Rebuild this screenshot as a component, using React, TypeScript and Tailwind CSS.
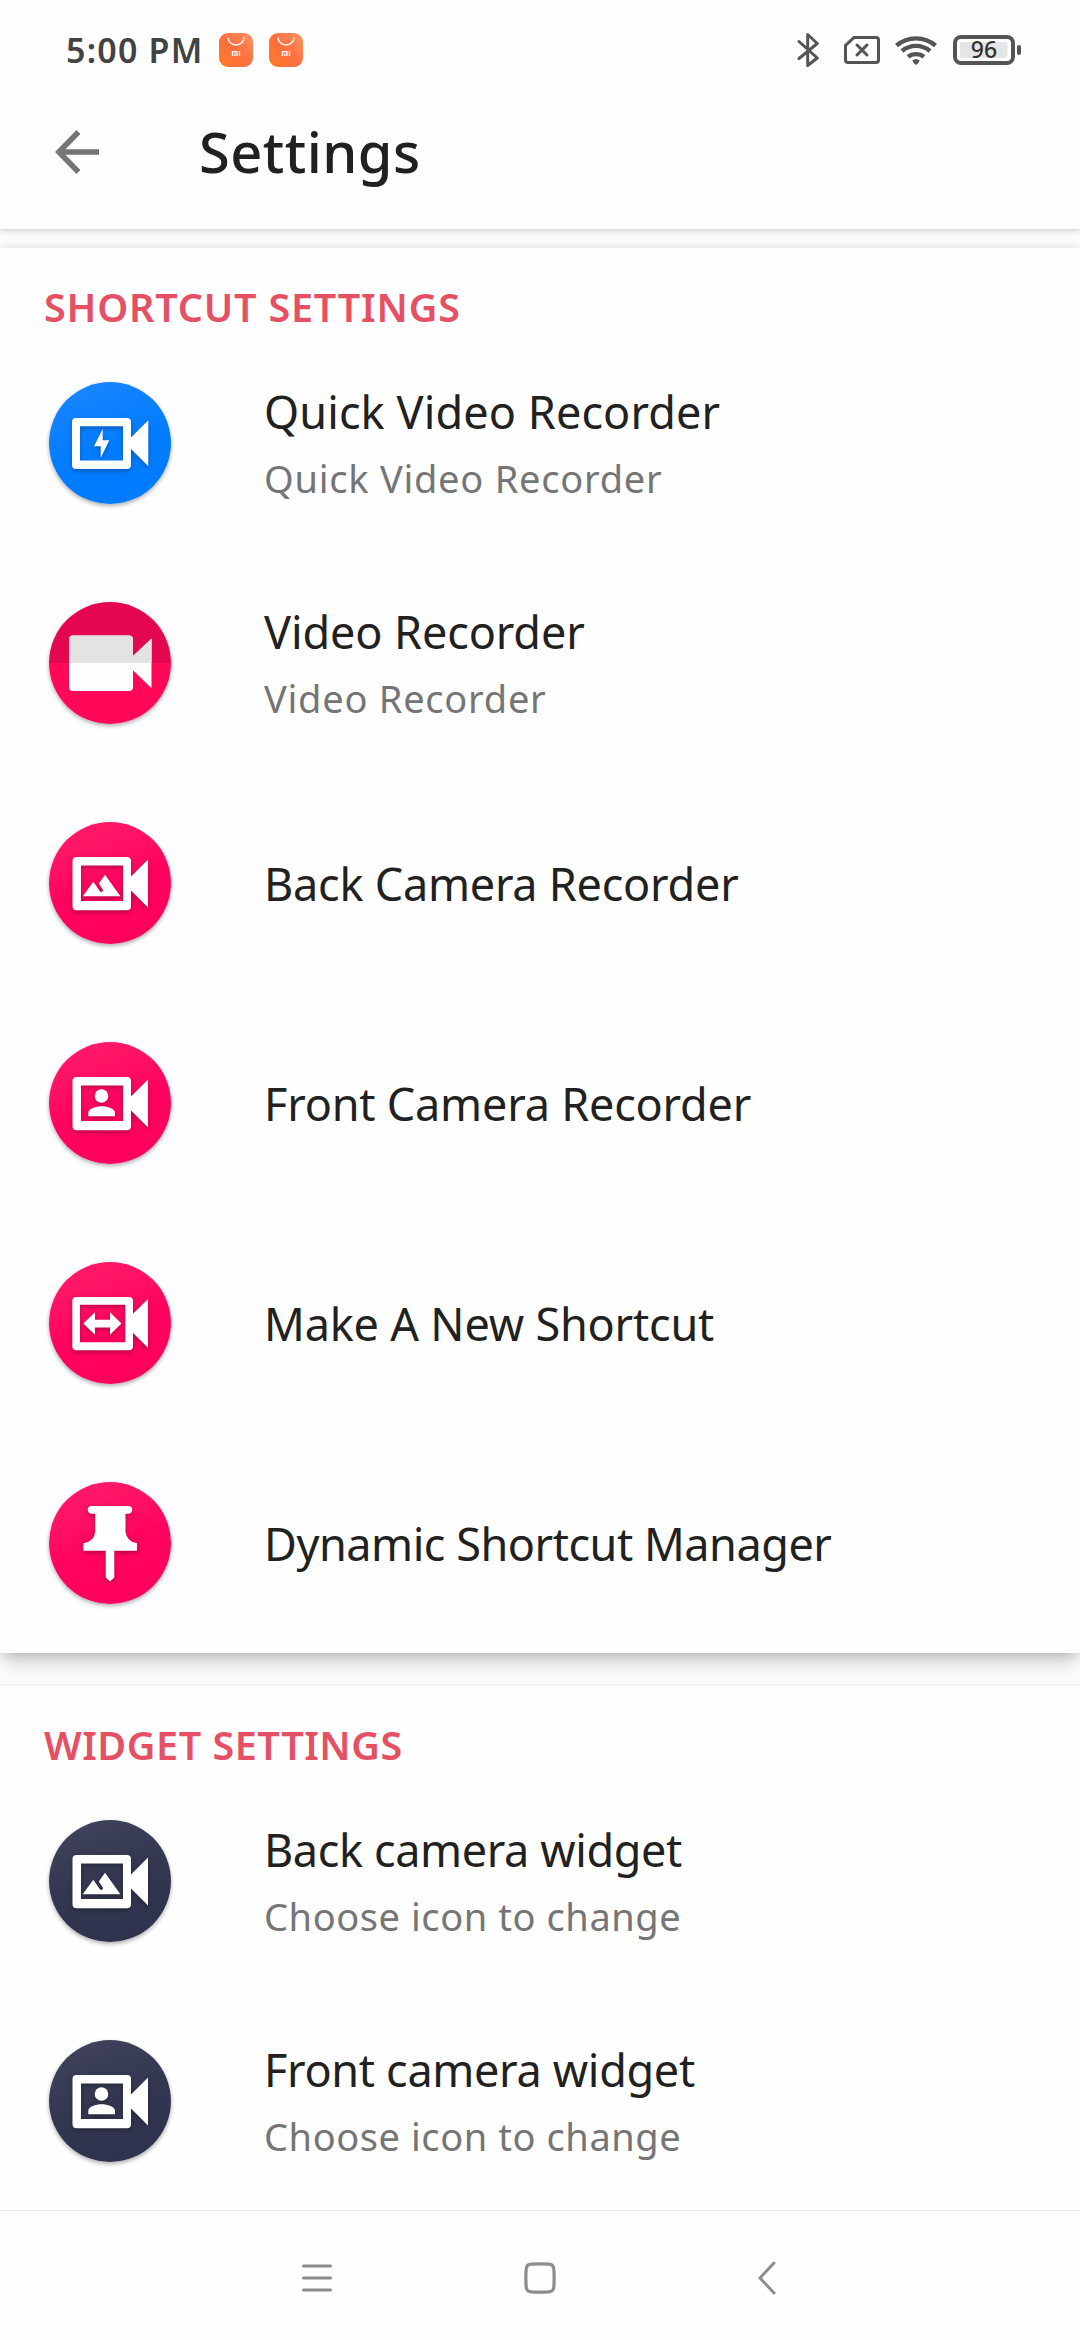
import type { ReactNode } from 'react';

type IconKind = 'quick' | 'video' | 'back' | 'front' | 'swap' | 'pin';
type Tone = 'blue' | 'pink' | 'flat' | 'navy';

interface Item {
  icon: IconKind;
  tone: Tone;
  title: string;
  titleTracking: string;
  subtitle?: string;
  subtitleTracking?: string;
}

const shortcuts: Item[] = [
  {
    icon: 'quick',
    tone: 'blue',
    title: 'Quick Video Recorder',
    titleTracking: 'tracking-[0.11px]',
    subtitle: 'Quick Video Recorder',
    subtitleTracking: 'tracking-[0.75px]',
  },
  {
    icon: 'video',
    tone: 'flat',
    title: 'Video Recorder',
    titleTracking: 'tracking-[-0.1px]',
    subtitle: 'Video Recorder',
    subtitleTracking: 'tracking-[0.75px]',
  },
  { icon: 'back', tone: 'pink', title: 'Back Camera Recorder', titleTracking: 'tracking-[-0.23px]' },
  { icon: 'front', tone: 'pink', title: 'Front Camera Recorder', titleTracking: 'tracking-[-0.2px]' },
  { icon: 'swap', tone: 'pink', title: 'Make A New Shortcut', titleTracking: 'tracking-[-0.18px]' },
  { icon: 'pin', tone: 'pink', title: 'Dynamic Shortcut Manager', titleTracking: 'tracking-[-0.46px]' },
];

const widgets: Item[] = [
  {
    icon: 'back',
    tone: 'navy',
    title: 'Back camera widget',
    titleTracking: 'tracking-[-0.38px]',
    subtitle: 'Choose icon to change',
    subtitleTracking: 'tracking-[0.57px]',
  },
  {
    icon: 'front',
    tone: 'navy',
    title: 'Front camera widget',
    titleTracking: 'tracking-[-0.32px]',
    subtitle: 'Choose icon to change',
    subtitleTracking: 'tracking-[0.57px]',
  },
];

const tones: Record<Tone, string> = {
  blue: 'bg-linear-160 from-[#1a87ff] via-[#037dff] to-[#007aff]',
  pink: 'bg-linear-160 from-[#ff1c6c] via-[#ff045f] to-[#ff005c]',
  flat: 'bg-linear-to-b from-[#e4064e] from-50% to-[#ff0858] to-50%',
  navy: 'bg-linear-160 from-[#43455e] via-[#33364f] to-[#2f324c]',
};

const frame =
  'M-33.5-26H17a4 4 0 0 1 4 4V23.300a4 4 0 0 1-4 4H-33.500a4 4 0 0 1-4-4V-22a4 4 0 0 1 4-4zM-29-17.500V18H13V-17.500z M21-6.500L38-23.500V24.500L21 7.500z';

const glyphs: Record<IconKind, ReactNode> = {
  quick: (
    <>
      <path
        fillRule="evenodd"
        d="M-34-25H17a4 4 0 0 1 4 4V22a4 4 0 0 1-4 4H-34a4 4 0 0 1-4-4V-21a4 4 0 0 1 4-4zM-30-16.700V17.500H13V-16.700z M21-5.500L38.300-22.700V23.200L21 6z"
      />
      <path d="M-7.300-14L-16 3.300H-9.300V15L-.7-2.700H-7.300z" />
    </>
  ),
  video: (
    <>
      <path
        fill="#fdfdfd"
        d="M-37-27.500H19a4 4 0 0 1 4 4V24a4 4 0 0 1-4 4H-37a4 4 0 0 1-4-4V-23.500a4 4 0 0 1 4-4zM23-7L41.500-24.500V25.200L23 7.300z"
      />
      <path fill="#e3e3e3" d="M-41 0V-23.500a4 4 0 0 1 4-4H19a4 4 0 0 1 4 4V-7L41.500-24.500V0z" />
    </>
  ),
  back: (
    <>
      <path fillRule="evenodd" d={frame} />
      <path d="M-27.300 13.200L-16.700-1.300L-9.700 8.800Q-7.800 9.300-6.800 7.300L-11.200.4L-5-8.300L10.400 13.200z" />
    </>
  ),
  front: (
    <>
      <path fillRule="evenodd" d={frame} />
      <circle cx="-8.500" cy="-7" r="6.800" />
      <path d="M-21.700 13.300V10C-21.700 5.500-14 3.300-8.400 3.300S5 5.500 5 10V13.300z" />
    </>
  ),
  swap: (
    <>
      <path
        fillRule="evenodd"
        d="M-33.700-26H19a4 4 0 0 1 4 4V23.300a4 4 0 0 1-4 4H-33.700a4 4 0 0 1-4-4V-22a4 4 0 0 1 4-4zM-30-18.300V19.300H15.300V-18.300z M23-9.300L38-24V24.700L23 10z"
      />
      <path d="M-26.700.5L-15-10.700V-3.300H0V-10.700L11.500.5L0 11.700V4.500H-15V11.700z" />
    </>
  ),
  pin: (
    <path d="M-19-37H19a3.900 3.900 0 0 1 0 7.700H15.500V-11.500Q16.500-1.500 27 .3V7.700H4.300V34.500L0 38.500L-4.300 34.500V7.700H-26.700V.3Q-15.500-1.500-14.800-11.500V-29.300H-19a3.900 3.900 0 0 1 0-7.700z" />
  ),
};

function StoreIcon() {
  return (
    <div className="flex h-[34px] w-[34px] shrink-0 rounded-[9px] bg-linear-to-tr from-[#ff7a20] via-[#ff6f3f] to-[#ff9460]">
      <svg viewBox="0 0 34 34" className="h-full w-full" fill="none" stroke="#fff">
        <path d="M9 4.500a8 7.500 0 0 0 16 0" strokeWidth="1.300" />
        <path d="M13.500 23V18.700h4.500V23M15.800 20.500V23M20.500 18V23" strokeWidth="1.300" />
      </svg>
    </div>
  );
}

function StatusBar() {
  return (
    <div className="flex h-[100px] items-center justify-between pr-[59px] pl-[66px]">
      <div className="flex items-center">
        <span className="w-[153px] text-[34px] leading-[40px] font-semibold tracking-[1.2px] whitespace-nowrap text-[#434343]">
          5:00 PM
        </span>
        <div className="flex gap-4">
          <StoreIcon />
          <StoreIcon />
        </div>
      </div>
      <svg viewBox="0 0 226 40" className="h-[40px] w-[226px]" fill="none" stroke="#555">
        {/* bluetooth */}
        <path
          d="M4 11.500L22.300 28L12.700 35.500V4.500L22.300 13.500L4 28.500"
          strokeWidth="3"
          strokeLinecap="round"
          strokeLinejoin="round"
        />
        {/* sim card */}
        <path
          d="M59 7.500H81a2.500 2.500 0 0 1 2.500 2.500V30a2.500 2.500 0 0 1-2.500 2.500H53a2.500 2.500 0 0 1-2.500-2.500V15.500z"
          strokeWidth="3"
        />
        <path d="M62 15L72 25M72 15L62 25" strokeWidth="3" strokeLinecap="round" />
        {/* wifi */}
        <g strokeWidth="4.300">
          <path d="M101.500 15.500a30 30 0 0 1 39 0" />
          <path d="M107 21a22 22 0 0 1 28 0" />
          <path d="M113 26.800a13 13 0 0 1 16 0" />
        </g>
        <path d="M117.300 30.500Q121 27.500 124.700 30.500Q123.500 34 121 35Q118.500 34 117.300 30.500z" fill="#555" stroke="none" />
        {/* battery */}
        <rect x="160" y="7" width="58" height="26" rx="6" strokeWidth="4" />
        <rect x="165" y="12" width="47.500" height="16" rx="2" fill="#e5e5e5" stroke="none" />
        <rect x="222" y="15" width="4" height="10" rx="2" fill="#555" stroke="none" />
        <text
          x="189"
          y="28.300"
          textAnchor="middle"
          fill="#333"
          stroke="none"
          className="text-[23px] font-medium"
        >
          96
        </text>
      </svg>
    </div>
  );
}

function Row({ item }: { item: Item }) {
  return (
    <div className="flex h-[220px] items-center pl-[49px]">
      <div
        className={`flex h-[122px] w-[122px] shrink-0 rounded-full shadow-[0_2px_4px_rgba(0,0,0,0.32)] ${tones[item.tone]}`}
      >
        <svg
          viewBox="-61 -61 122 122"
          fill="#fff"
          className={item.icon === 'video' ? 'h-full w-full' : 'h-full w-full drop-shadow-[0_2px_2px_rgba(0,0,0,0.28)]'}
        >
          {glyphs[item.icon]}
        </svg>
      </div>
      <div className={item.subtitle ? 'flex flex-col pt-[3px] pl-[93px] whitespace-nowrap' : 'flex flex-col pt-px pl-[93px] whitespace-nowrap'}>
        <div className={`text-[45px] leading-[66px] text-[#212121] ${item.titleTracking}`}>{item.title}</div>
        {item.subtitle && (
          <div className={`text-[38px] leading-[66px] text-[#757575] ${item.subtitleTracking}`}>{item.subtitle}</div>
        )}
      </div>
    </div>
  );
}

function SectionTitle({ tracking, children }: { tracking: string; children: ReactNode }) {
  return (
    <div className="flex h-[85px] items-end pb-px pl-[44px]">
      <h2 className={`text-[39.5px] leading-[50px] font-semibold text-[#e55064] ${tracking}`}>{children}</h2>
    </div>
  );
}

export default function App() {
  return (
    <div className="flex h-[2340px] w-[1080px] flex-col overflow-hidden bg-[#fefefe] font-['Noto_Sans',sans-serif]">
      <header className="relative z-10 h-[229px] shrink-0 bg-[#fefefe] shadow-[0_1px_6px_rgba(0,0,0,0.22)]">
        <StatusBar />
        <div className="flex h-[104px] items-center pl-[55px]">
          <svg viewBox="0 0 44 44" className="h-[44px] w-[44px]" fill="none" stroke="#757575" strokeWidth="5.500">
            <path d="M44 22H4M23.500 2L3.800 22L23.500 42" />
          </svg>
          <h1 className="pb-[2px] pl-[100px] text-[56px] leading-[80px] font-medium tracking-[0.45px] text-[#212121]">Settings</h1>
        </div>
      </header>

      <main className="flex min-h-0 flex-1 flex-col overflow-hidden bg-[#fbfbfb] pt-[19px]">
        <section className="relative shrink-0 bg-[#fefefe] shadow-[0_0_10px_rgba(0,0,0,0.1),0_10px_18px_-4px_rgba(0,0,0,0.25)]">
          <SectionTitle tracking="tracking-[0.8px]">SHORTCUT SETTINGS</SectionTitle>
          {shortcuts.map((item) => (
            <Row key={item.title} item={item} />
          ))}
        </section>

        <section className="mt-[31px] shrink-0 border-t-2 border-[#f3f3f3] bg-[#fefefe]">
          <SectionTitle tracking="tracking-[0.55px]">WIDGET SETTINGS</SectionTitle>
          {widgets.map((item) => (
            <Row key={item.title} item={item} />
          ))}
        </section>
      </main>

      <nav className="flex h-[130px] shrink-0 items-center border-t border-[#e3e3e3] bg-[#fefefe] pt-[5px] pl-[302px]">
        <svg viewBox="0 0 30 32" className="h-[32px] w-[30px]" stroke="#8c8c8c" strokeWidth="3" strokeLinecap="round">
          <path d="M1.500 4H28.500M1.500 16H28.500M1.500 28H28.500" />
        </svg>
        <svg viewBox="0 0 32 32" className="ml-[192px] h-[32px] w-[32px]" fill="none" stroke="#8c8c8c" strokeWidth="3.200">
          <path d="M7 2.200Q16 1.400 25 2.200Q29.500 2.500 29.800 7Q30.500 16 29.800 25Q29.500 29.500 25 29.800Q16 30.600 7 29.800Q2.500 29.500 2.200 25Q1.500 16 2.200 7Q2.500 2.500 7 2.200z" />
        </svg>
        <svg viewBox="0 0 18 34" className="ml-[202px] h-[34px] w-[18px]" fill="none" stroke="#8c8c8c" strokeWidth="3" strokeLinecap="round">
          <path d="M16 2L2 17L16 32" />
        </svg>
      </nav>
    </div>
  );
}
